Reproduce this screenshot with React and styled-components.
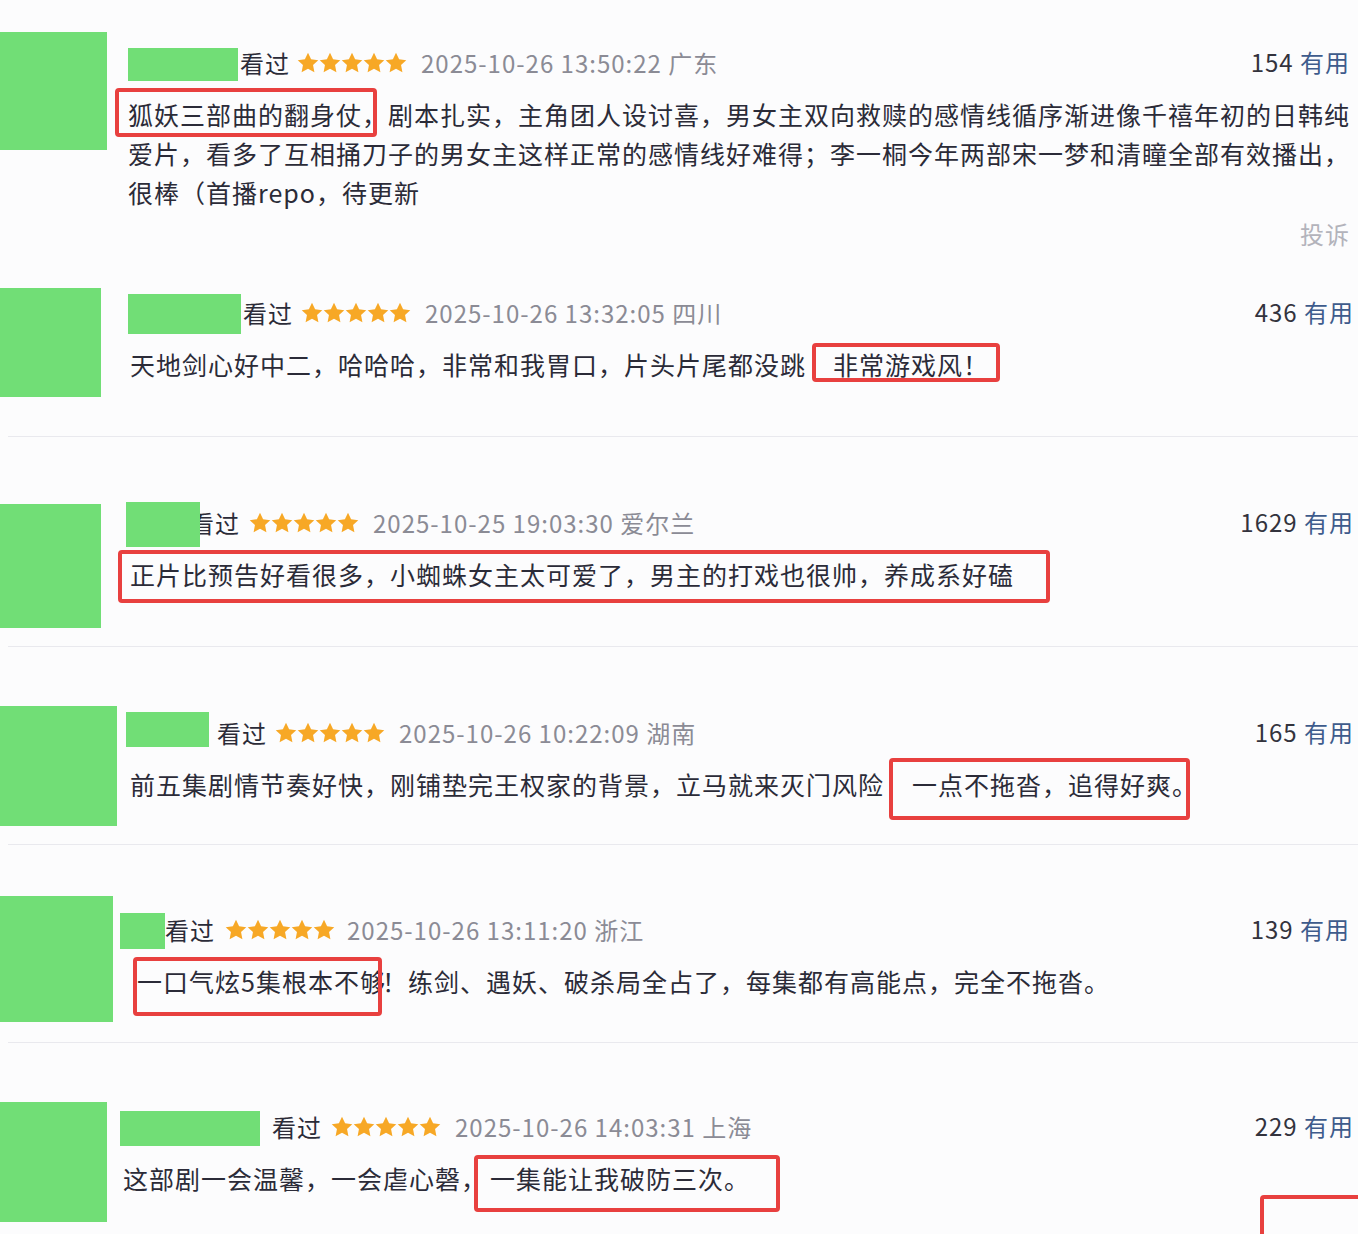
import React from 'react';
import styled, { createGlobalStyle } from 'styled-components';

const GlobalStyle = createGlobalStyle`
  html, body {
    margin: 0;
    padding: 0;
    background: #fcfcfd;
    overflow: hidden;
  }
  body {
    font-family: "Noto Sans CJK SC", "Noto Sans", sans-serif;
    color: #2b2b38;
  }
`;

const Page = styled.div`
  width: 1358px;
  height: 1234px;
  overflow: hidden;
  background: #fcfcfd;
`;

const Section = styled.section`
  display: flex;
  align-items: flex-start;
  height: ${(p) => p.$h}px;
  overflow: hidden;
`;

const Divider = styled.div`
  height: 1px;
  margin-left: 8px;
  background: #e9e9ee;
`;

const Avatar = styled.div`
  flex: none;
  width: ${(p) => p.$w}px;
  height: ${(p) => p.$h}px;
  margin-top: ${(p) => p.$top}px;
  background: #71de76;
`;

const Main = styled.div`
  flex: 1;
  min-width: 0;
  margin-left: ${(p) => p.$left}px;
  margin-top: ${(p) => p.$top}px;
`;

const Header = styled.div`
  display: flex;
  align-items: center;
  height: 40px;
  font-size: 24px;
  letter-spacing: 1px;
  white-space: nowrap;
`;

const NameBlock = styled.div`
  position: relative;
  z-index: 1;
  flex: none;
  width: ${(p) => p.$w}px;
  height: ${(p) => p.$h}px;
  margin-right: ${(p) => p.$gap}px;
  margin-bottom: ${(p) => p.$shift || 0}px;
  background: #71de76;
`;

const Watched = styled.span`
  margin-bottom: 4px;
  color: #2b2b38;
`;

const Stars = styled.span`
  display: inline-flex;
  gap: 0;
  margin-left: ${(p) => p.$gap - 1}px;
  margin-bottom: 2px;
`;

const DateText = styled.span`
  margin-left: ${(p) => p.$gap - 1}px;
  margin-bottom: 4px;
  color: #8b8b95;
`;

const Content = styled.div`
  margin-top: 11px;
  padding-left: ${(p) => p.$indent}px;
  font-size: 25px;
  letter-spacing: 1px;
  line-height: 39px;
  color: #2b2b38;
`;

const Line = styled.div`
  height: 39px;
  white-space: nowrap;
`;

const Highlight = styled.span`
  position: relative;
  margin-left: ${(p) => p.$ml || 0}px;
  margin-right: ${(p) => p.$mr || 0}px;

  &::after {
    content: '';
    position: absolute;
    left: ${(p) => -p.$bl}px;
    right: ${(p) => -p.$br}px;
    top: ${(p) => 20 - p.$up}px;
    bottom: ${(p) => 16 - p.$down}px;
    border: 4px solid #e8403f;
    border-radius: 4px;
  }
`;

const Side = styled.div`
  flex: none;
  display: flex;
  flex-direction: column;
  align-items: flex-end;
  margin-top: ${(p) => p.$top}px;
  margin-right: ${(p) => p.$right}px;
`;

const Useful = styled.div`
  height: 40px;
  line-height: 36px;
  font-size: 24px;
  letter-spacing: 1px;
  color: #33333d;
  white-space: nowrap;
`;

const UsefulLabel = styled.span`
  color: #3e5b8c;
`;

const Report = styled.div`
  margin-top: 132px;
  height: 40px;
  line-height: 36px;
  font-size: 24px;
  letter-spacing: 1px;
  color: #b3b3bb;
`;

const CutBox = styled.div`
  box-sizing: border-box;
  margin-top: 47px;
  margin-right: -20px;
  width: 114px;
  height: 60px;
  border: 4px solid #e8403f;
  border-radius: 4px;
`;

const Star = () => (
  <svg width="22" height="22" viewBox="0 0 24 24">
    <path
      d="M12 .8l3.4 7.1 7.8 1-5.7 5.4 1.5 7.7L12 18.3l-7 3.7 1.5-7.7L.8 8.9l7.8-1z"
      fill="#f7a826"
    />
  </svg>
);

const comments = [
  {
    h: 270, avatar: { top: 32, w: 107, h: 118 }, left: 21, top: 44, right: 8,
    name: { w: 110, h: 33, gap: 2 }, starGap: 8, dateGap: 15,
    date: '2025-10-26 13:50:22 广东', useful: 154, indent: -1, report: true,
    lines: [
      [{ hl: '狐妖三部曲的翻身仗，', bl: 13, br: -11, up: 28, down: 21 },
        '剧本扎实，主角团人设讨喜，男女主双向救赎的感情线循序渐进像千禧年初的日韩纯'],
      ['爱片，看多了互相捅刀子的男女主这样正常的感情线好难得；李一桐今年两部宋一梦和清瞳全部有效播出，'],
      ['很棒（首播repo，待更新'],
    ],
  },
  {
    h: 166, divider: true, avatar: { top: 18, w: 101, h: 109 }, left: 27, top: 24, right: 4,
    name: { w: 113, h: 40, gap: 2 }, starGap: 9, dateGap: 15,
    date: '2025-10-26 13:32:05 四川', useful: 436, indent: 2,
    lines: [
      ['天地剑心好中二，哈哈哈，非常和我胃口，片头片尾都没跳',
        { hl: '非常游戏风！', ml: 27, bl: 21, br: 11, up: 23, down: 16 }],
    ],
  },
  {
    h: 209, divider: true, avatar: { top: 67, w: 101, h: 124 }, left: 25, top: 67, right: 4,
    name: { w: 74, h: 45, gap: -10 }, starGap: 10, dateGap: 15,
    date: '2025-10-25 19:03:30 爱尔兰', useful: 1629, indent: 4,
    lines: [
      [{ hl: '正片比预告好看很多，小蜘蛛女主太可爱了，男主的打戏也很帅，养成系好磕', bl: 12, br: 36, up: 26, down: 27 }],
    ],
  },
  {
    h: 197, divider: true, avatar: { top: 59, w: 117, h: 120 }, left: 9, top: 67, right: 4,
    name: { w: 83, h: 35, gap: 8, shift: 9 }, starGap: 9, dateGap: 15,
    date: '2025-10-26 10:22:09 湖南', useful: 165, indent: 4,
    lines: [
      ['前五集剧情节奏好快，刚铺垫完王权家的背景，立马就来灭门风险',
        { hl: '一点不拖沓，追得好爽。', ml: 28, bl: 23, br: -8, up: 28, down: 34 }],
    ],
  },
  {
    h: 197, divider: true, avatar: { top: 51, w: 113, h: 126 }, left: 7, top: 66, right: 8,
    name: { w: 45, h: 36, gap: 0 }, starGap: 11, dateGap: 13,
    date: '2025-10-26 13:11:20 浙江', useful: 139, indent: 17,
    lines: [
      [{ hl: '一口气炫5集根本不够', mr: -4, bl: 4, br: -4, up: 26, down: 33 },
        '！练剑、遇妖、破杀局全占了，每集都有高能点，完全不拖沓。'],
    ],
  },
  {
    h: 191, avatar: { top: 59, w: 107, h: 120 }, left: 13, top: 65, right: 4,
    name: { w: 140, h: 35, gap: 12 }, starGap: 10, dateGap: 15,
    date: '2025-10-26 14:03:31 上海', useful: 229, indent: 3, cut: true,
    lines: [
      ['这部剧一会温馨，一会虐心磬，',
        { hl: '一集能让我破防三次。', ml: 3, bl: 16, br: 30, up: 25, down: 32 }],
    ],
  },
];

function Comment({ c }) {
  return (
    <>
      <Section $h={c.h}>
        <Avatar $top={c.avatar.top} $w={c.avatar.w} $h={c.avatar.h} />
        <Main $left={c.left} $top={c.top}>
          <Header>
            <NameBlock $w={c.name.w} $h={c.name.h} $gap={c.name.gap} $shift={c.name.shift} />
            <Watched>看过</Watched>
            <Stars $gap={c.starGap}>
              {[0, 1, 2, 3, 4].map((i) => <Star key={i} />)}
            </Stars>
            <DateText $gap={c.dateGap}>{c.date}</DateText>
          </Header>
          <Content $indent={c.indent}>
            {c.lines.map((line, i) => (
              <Line key={i}>
                {line.map((seg, j) =>
                  typeof seg === 'string' ? (
                    <span key={j}>{seg}</span>
                  ) : (
                    <Highlight
                      key={j}
                      $ml={seg.ml}
                      $mr={seg.mr}
                      $bl={seg.bl}
                      $br={seg.br}
                      $up={seg.up}
                      $down={seg.down}
                    >
                      {seg.hl}
                    </Highlight>
                  )
                )}
              </Line>
            ))}
          </Content>
        </Main>
        <Side $top={c.top} $right={c.right}>
          <Useful>
            {c.useful} <UsefulLabel>有用</UsefulLabel>
          </Useful>
          {c.report && <Report>投诉</Report>}
          {c.cut && <CutBox />}
        </Side>
      </Section>
      {c.divider && <Divider />}
    </>
  );
}

export default function App() {
  return (
    <Page>
      <GlobalStyle />
      {comments.map((c, i) => (
        <Comment key={i} c={c} />
      ))}
    </Page>
  );
}
